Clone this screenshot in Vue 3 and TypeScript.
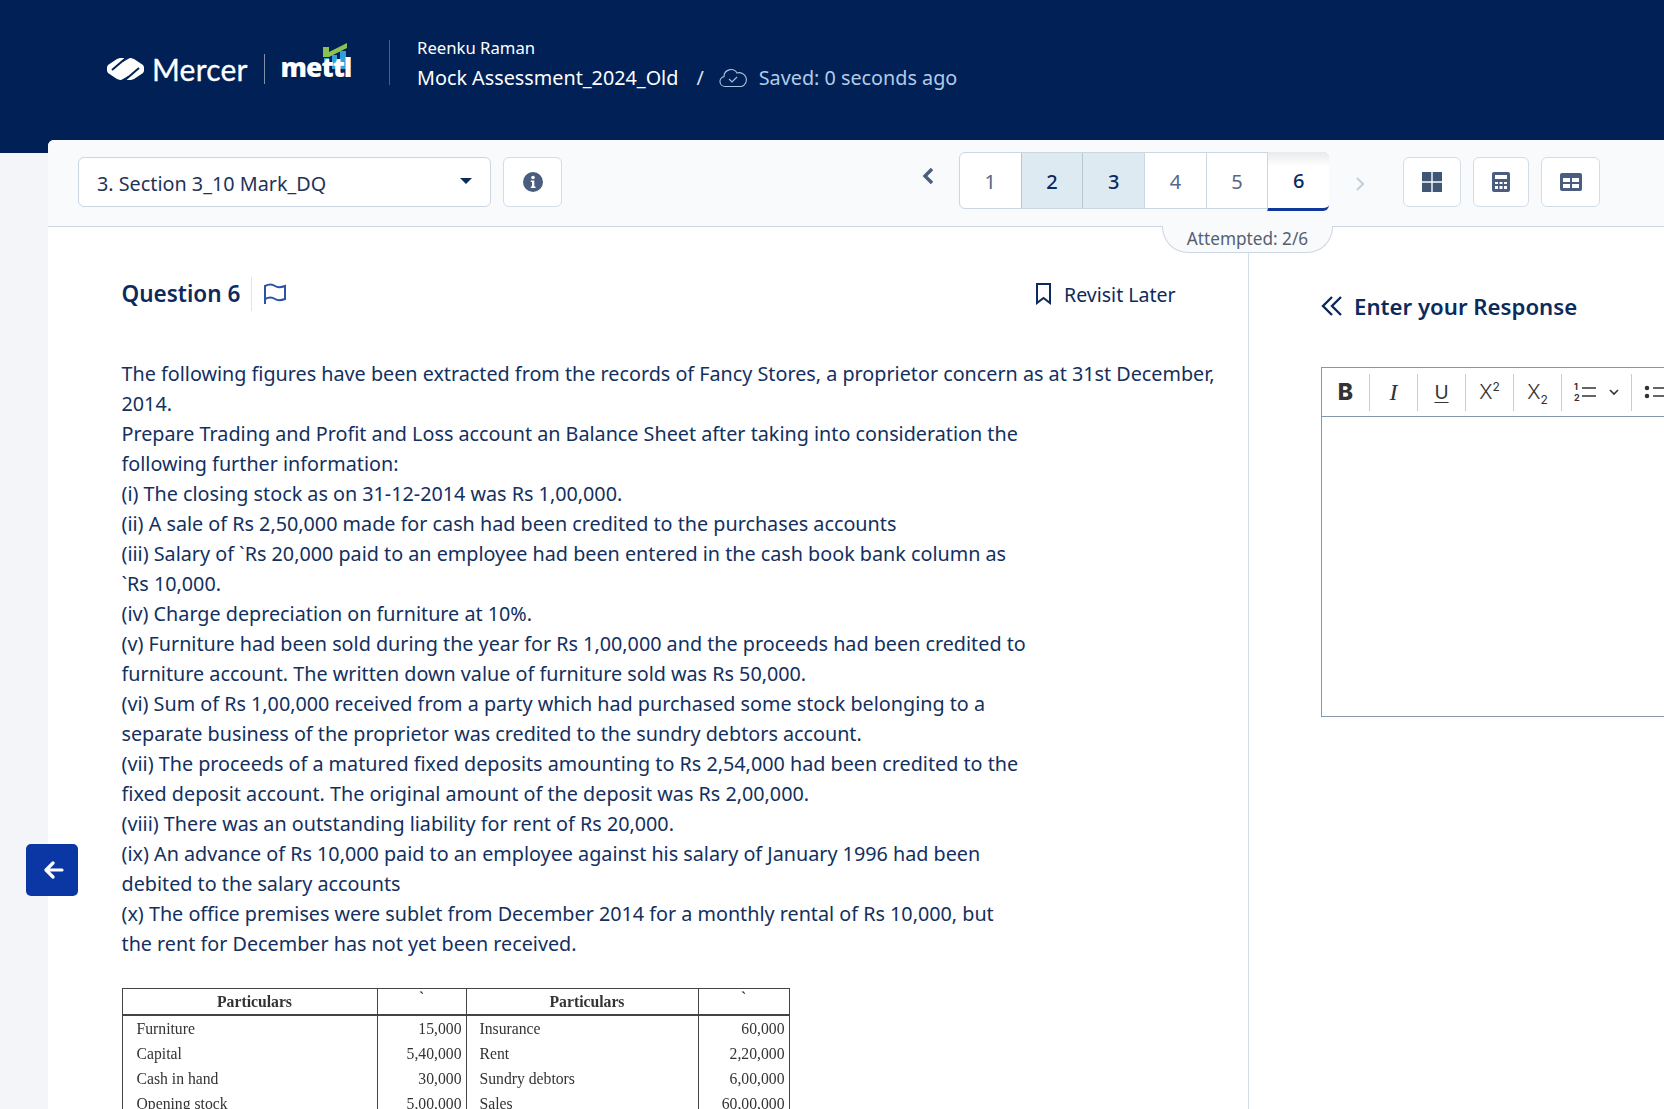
<script setup lang="ts">
const pages = [
  { n: 1, state: '' },
  { n: 2, state: 'done' },
  { n: 3, state: 'done' },
  { n: 4, state: '' },
  { n: 5, state: '' },
  { n: 6, state: 'current' }
]

const lines = [
  'The following figures have been extracted from the records of Fancy Stores, a proprietor concern as at 31st December,',
  '2014.',
  'Prepare Trading and Profit and Loss account an Balance Sheet after taking into consideration the',
  'following further information:',
  '(i) The closing stock as on 31-12-2014 was Rs 1,00,000.',
  '(ii) A sale of Rs 2,50,000 made for cash had been credited to the purchases accounts',
  '(iii) Salary of `Rs 20,000 paid to an employee had been entered in the cash book bank column as',
  '`Rs 10,000.',
  '(iv) Charge depreciation on furniture at 10%.',
  '(v) Furniture had been sold during the year for Rs 1,00,000 and the proceeds had been credited to',
  'furniture account. The written down value of furniture sold was Rs 50,000.',
  '(vi) Sum of Rs 1,00,000 received from a party which had purchased some stock belonging to a',
  'separate business of the proprietor was credited to the sundry debtors account.',
  '(vii) The proceeds of a matured fixed deposits amounting to Rs 2,54,000 had been credited to the',
  'fixed deposit account. The original amount of the deposit was Rs 2,00,000.',
  '(viii) There was an outstanding liability for rent of Rs 20,000.',
  '(ix) An advance of Rs 10,000 paid to an employee against his salary of January 1996 had been',
  'debited to the salary accounts',
  '(x) The office premises were sublet from December 2014 for a monthly rental of Rs 10,000, but',
  'the rent for December has not yet been received.'
]

const rows = [
  ['Furniture', '15,000', 'Insurance', '60,000'],
  ['Capital', '5,40,000', 'Rent', '2,20,000'],
  ['Cash in hand', '30,000', 'Sundry debtors', '6,00,000'],
  ['Opening stock', '5,00,000', 'Sales', '60,00,000']
]
</script>

<template>
  <div class="page">
    <header class="topbar">
      <div class="logos">
        <svg class="mercer-mark" width="37" height="22" viewBox="0 0 37 22">
          <path d="M1 7 10 1 13 0h11l3 1 9 6 1 2v4l-1 2-9 6-3 1H13l-3-1-9-6-1-2V9z" fill="#fff" />
          <path d="M19 0 5 12" stroke="#002056" stroke-width="2" />
          <path d="M19 1l-4 3h1l5-3 2-1h-6z" fill="#002056" />
          <path d="M18 22 32 10" stroke="#002056" stroke-width="2" />
          <path d="M18 21l4-3h-1l-5 3-2 1h6z" fill="#002056" />
        </svg>
        <span class="mercer">Mercer</span>
        <span class="logo-sep"></span>
        <span class="mettl-wrap">
          <svg class="mettl-bars" width="26" height="26" viewBox="0 0 26 26">
            <path d="M2 15h5v11H2zM10 12h5v14h-5zM18 8h6v18h-6z" fill="#2f9fe0" />
            <path d="M1 4h6v5L25 0v5L7 14H1z" fill="#8cc152" />
          </svg>
          <span class="mettl">mettl</span>
        </span>
      </div>
      <div class="head-text">
        <div class="candidate">Reenku Raman</div>
        <div class="test-row">
          <span>Mock Assessment_2024_Old</span>
          <span class="slash">/</span>
          <svg width="28" height="20" viewBox="0 0 28 20" fill="none" stroke="#a9c3df" stroke-width="1.100">
            <path d="M7 18.500H6a5 5 0 0 1-1-9.900A7 7 0 0 1 18 5a5.500 5.500 0 0 1 4.500 13.500z" />
            <path d="m10 11 3 3 5-5" />
          </svg>
          <span class="saved">Saved: 0 seconds ago</span>
        </div>
      </div>
    </header>

    <main class="card">
      <div class="toolbar">
        <div class="section-select">
          <span>3. Section 3_10 Mark_DQ</span>
          <i class="caret"></i>
        </div>
        <button class="tool info">
          <svg width="20" height="20" viewBox="0 0 20 20">
            <circle cx="10" cy="10" r="10" fill="#4a5d7e" />
            <circle cx="10" cy="5.500" r="1.800" fill="#fff" />
            <path d="M7.800 8.500h3.500v6h1.200v1.500H7.800v-1.500H9v-4.500H7.800z" fill="#fff" />
          </svg>
        </button>

        <div class="nav">
          <svg class="chev" width="12" height="18" viewBox="0 0 12 18" fill="none" stroke="#4a5d7e" stroke-width="3.400">
            <path d="M10 2 3 9l7 7" />
          </svg>
          <div class="pager">
            <div
              v-for="p in pages"
              :key="p.n"
              class="page-cell"
              :class="p.state"
            >
              {{ p.n }}
            </div>
          </div>
          <svg class="chev next" width="10" height="16" viewBox="0 0 10 16" fill="none" stroke="#c3ced9" stroke-width="2">
            <path d="m2 2 6 6-6 6" />
          </svg>
        </div>

        <div class="tools">
          <button class="tool grid-btn">
            <svg width="20" height="20" viewBox="0 0 20 20" fill="#3f5675">
              <path d="M0 0h9.300v9.300H0zM10.700 0H20v9.300h-9.300zM0 10.700h9.300V20H0zM10.700 10.700H20V20h-9.300z" />
            </svg>
          </button>
          <button class="tool calc-btn">
            <svg width="18" height="20" viewBox="0 0 18 20">
              <path fill="#4a5d7e" fill-rule="evenodd" d="M2 0h14a2 2 0 0 1 2 2v16a2 2 0 0 1-2 2H2a2 2 0 0 1-2-2V2a2 2 0 0 1 2-2zm1 3v4h12V3zm0 7v2h3v-2zm4.500 0v2h3v-2zm4.500 0v2h3v-2zm-9 4v3h3v-3zm4.500 0v3h3v-3zm4.500 0v3h3v-3z" />
            </svg>
          </button>
          <button class="tool table-btn">
            <svg width="22" height="18" viewBox="0 0 22 18">
              <path fill="#4a5d7e" fill-rule="evenodd" d="M2 0h18a2 2 0 0 1 2 2v14a2 2 0 0 1-2 2H2a2 2 0 0 1-2-2V2a2 2 0 0 1 2-2zm1 5v4h7V5zm9 0v4h7V5zM3 11v4h7v-4zm9 0v4h7v-4z" />
            </svg>
          </button>
        </div>

        <div class="attempted">Attempted: 2/6</div>
      </div>

      <div class="panes">
        <section class="question">
          <div class="q-head">
            <h2>Question 6</h2>
            <span class="q-sep"></span>
            <svg class="flag" width="24" height="22" viewBox="0 0 24 22" fill="none" stroke="#2a52a8" stroke-width="2">
              <path d="M2 21V3c4-2 7-2 10 0s6 1.500 10 0v13c-4 1.500-7 2-10 0s-6-2-10 0" />
            </svg>
            <div class="revisit">
              <svg width="17" height="22" viewBox="0 0 17 22" fill="none" stroke="#0d2a5c" stroke-width="2">
                <path d="M2 1h13v19l-6.500-5L2 20z" />
              </svg>
              <span>Revisit Later</span>
            </div>
          </div>

          <div class="q-text">
            <div v-for="(line, i) in lines" :key="i">{{ line }}</div>
          </div>

          <table class="ledger">
            <colgroup>
              <col style="width: 255px" />
              <col style="width: 89px" />
              <col style="width: 232px" />
              <col style="width: 91px" />
            </colgroup>
            <thead>
              <tr>
                <th class="head-l">Particulars</th>
                <th class="tick">`</th>
                <th class="head-l">Particulars</th>
                <th class="tick">`</th>
              </tr>
            </thead>
            <tbody>
              <tr v-for="row in rows" :key="row[0]">
                <td class="name">{{ row[0] }}</td>
                <td class="num">{{ row[1] }}</td>
                <td class="name2">{{ row[2] }}</td>
                <td class="num">{{ row[3] }}</td>
              </tr>
            </tbody>
          </table>
        </section>

        <section class="response">
          <div class="resp-head">
            <svg width="22" height="22" viewBox="0 0 22 22" fill="none" stroke="#0d2a5c" stroke-width="2.400">
              <path d="M11 2 2 11l9 9M20 2l-9 9 9 9" />
            </svg>
            <h3>Enter your Response</h3>
          </div>
          <div class="editor">
            <div class="ed-bar">
              <div class="ed-btn"><b class="bold">B</b></div>
              <div class="ed-btn"><i class="ital">I</i></div>
              <div class="ed-btn"><span class="under">U</span></div>
              <div class="ed-btn"><span class="script">X<sup>2</sup></span></div>
              <div class="ed-btn"><span class="script">X<sub>2</sub></span></div>
              <div class="ed-btn wide">
                <svg width="52" height="22" viewBox="0 0 52 22" fill="none" stroke="#333" stroke-width="1.600">
                  <path d="M11 7h14M11 15h14M39 9l4 4 4-4" />
                  <text x="3" y="9" class="mini">1</text>
                  <text x="3" y="20" class="mini">2</text>
                </svg>
              </div>
              <div class="ed-btn">
                <svg width="24" height="20" viewBox="0 0 24 20" fill="none" stroke="#333" stroke-width="1.500">
                  <circle cx="3" cy="6" r="1.500" fill="#333" />
                  <circle cx="3" cy="14" r="1.500" fill="#333" />
                  <path d="M9 6h14M9 14h14" />
                </svg>
              </div>
            </div>
          </div>
        </section>
      </div>
    </main>

    <button class="back-btn">
      <svg width="20" height="18" viewBox="0 0 20 18" fill="none" stroke="#fff" stroke-width="3.200" stroke-linecap="round" stroke-linejoin="round">
        <path d="M9 2 2 9l7 7M3 9h15" />
      </svg>
    </button>
  </div>
</template>

<style>
html,
body {
  margin: 0;
  overflow: hidden;
  background: #f3f5f8;
}
</style>

<style scoped>
.page {
  position: relative;
  height: 1109px;
  overflow: hidden;
  font-family: 'Noto Sans', 'Open Sans', sans-serif;
  color: #0d2a5c;
}

.topbar {
  height: 153px;
  box-sizing: border-box;
  background: #002056;
  display: flex;
  align-items: flex-start;
  padding: 40px 0 0 107px;
  color: #fff;
}

.logos {
  display: flex;
  align-items: center;
  height: 45px;
  width: 283px;
  box-sizing: border-box;
  padding-top: 13px;
  border-right: 1px solid #4a5f82;
}

.mercer-mark {
  flex: none;
  margin-right: 8px;
}

.mercer {
  font-size: 30px;
  line-height: 1;
  font-family: Lato, sans-serif;
  letter-spacing: 0.2px;
  -webkit-text-stroke: 0.3px #fff;
}

.logo-sep {
  width: 1px;
  height: 30px;
  background: #8090aa;
  margin: 0 16px;
}

.mettl-wrap {
  position: relative;
  display: block;
  padding: 0 0 2px 0;
}

.mettl {
  position: relative;
  z-index: 1;
  font-size: 26.500px;
  font-weight: 800;
  line-height: 1;
  font-family: 'Open Sans', sans-serif;
  letter-spacing: -1px;
}

.mettl-bars {
  position: absolute;
  left: 41px;
  top: -11px;
}

.head-text {
  padding-left: 27px;
  margin-top: -4px;
}

.candidate {
  font-size: 16.700px;
  line-height: 24px;
  margin-bottom: 3px;
}

.test-row {
  display: flex;
  align-items: center;
  font-size: 19.800px;
  line-height: 30px;
}

.slash {
  margin: 0 15px 0 18px;
  color: #dbe4f0;
}

.saved {
  margin-left: 12px;
  color: #b4cbe6;
}

.card {
  margin: -13px 0 0 48px;
  height: 970px;
  background: #fff;
  border-radius: 6px 0 0 0;
  position: relative;
}

.toolbar {
  position: relative;
  height: 87px;
  box-sizing: border-box;
  background: #f8fafc;
  border-bottom: 1px solid #cbd6e2;
  border-radius: 6px 0 0 0;
  display: flex;
  align-items: flex-start;
  padding: 17px 0 0 30px;
}

.section-select {
  width: 413px;
  height: 50px;
  box-sizing: border-box;
  background: #fff;
  border: 1px solid #cbd6e2;
  border-radius: 6px;
  display: flex;
  align-items: center;
  justify-content: space-between;
  padding: 2px 18px 0 18px;
  font-size: 19.800px;
  color: #1e3358;
}

.caret {
  width: 0;
  height: 0;
  border: 6px solid transparent;
  border-top: 6px solid #0d2a5c;
  border-bottom: 0;
  margin-top: -4px;
}

.tool {
  height: 50px;
  padding: 0;
  box-sizing: border-box;
  background: #fff;
  border: 1px solid #d3dde8;
  border-radius: 6px;
  display: flex;
  align-items: center;
  justify-content: center;
}

.info {
  width: 59px;
  margin-left: 12px;
}

.nav {
  display: flex;
  align-items: flex-start;
  margin: -5px 0 0 360px;
}

.chev {
  margin: 15px 25px 0 0;
  flex: none;
}

.chev.next {
  margin: 24px 0 0 26px;
}

.pager {
  width: 370px;
  height: 57px;
  box-sizing: border-box;
  display: flex;
  background: #fff;
  border: 1px solid #cbd6e2;
  border-radius: 6px;
}

.page-cell {
  flex: 1;
  display: flex;
  align-items: center;
  justify-content: center;
  border-left: 1px solid #cbd6e2;
  font-size: 20px;
  color: #56688a;
  padding-top: 1px;
}

.page-cell:first-child {
  border-left: 0;
}

.page-cell.done {
  background: #deeaf1;
  border-left-color: #b8c7d4;
  color: #0d2a5c;
  font-weight: 500;
}

.page-cell.current {
  color: #0d2a5c;
  font-weight: 500;
  margin: -1px -1px -3px 0;
  background: linear-gradient(#e9eaec, #fff 14px);
  border-bottom: 3px solid #0f3a9c;
  border-radius: 0 6px 6px 0;
}

.tools {
  display: flex;
  gap: 12px;
  margin-left: 38px;
}

.grid-btn {
  width: 58px;
}

.calc-btn {
  width: 56px;
}

.table-btn {
  width: 59px;
}

.attempted {
  position: absolute;
  left: 1114px;
  top: 86px;
  width: 171px;
  height: 27px;
  box-sizing: border-box;
  background: #f8fafc;
  border: 1px solid #cbd6e2;
  border-top: 0;
  border-radius: 0 0 26px 26px;
  text-align: center;
  font-size: 17.200px;
  line-height: 25px;
  color: #555f6e;
}

.panes {
  display: flex;
  height: 883px;
}

.question {
  width: 1201px;
  flex: none;
  box-sizing: border-box;
  border-right: 1px solid #d3dde8;
  padding: 48px 0 0 73.500px;
}

.q-head {
  display: flex;
  align-items: center;
  height: 38px;
  width: 1054px;
}

.q-head h2 {
  margin: 0;
  font-size: 22.500px;
  font-weight: 600;
  line-height: 38px;
}

.q-sep {
  width: 1px;
  height: 34px;
  background: #dfe5ec;
  margin: 0 11px;
}

.flag {
  flex: none;
}

.revisit {
  margin-left: auto;
  display: flex;
  align-items: center;
  gap: 12px;
  font-size: 19.500px;
}

.q-text {
  margin-top: 46px;
  font-size: 19.750px;
  line-height: 30px;
  color: #13305f;
  white-space: nowrap;
}

.ledger {
  margin-top: 29px;
  width: 667px;
  table-layout: fixed;
  border-collapse: collapse;
  border: 1.500px solid #555;
  font-family: 'Liberation Serif', serif;
  font-size: 15.700px;
  color: #333;
  filter: blur(0.45px);
}

.ledger th {
  height: 25px;
  padding: 0;
  border: 1px solid #444;
  border-bottom: 2px solid #444;
  font-size: 15.700px;
}

.ledger th.head-l {
  padding-left: 10px;
}

.ledger th.tick {
  vertical-align: top;
  line-height: 18px;
}

.ledger td {
  height: 25px;
  padding: 0;
  border-left: 1px solid #444;
  border-right: 1px solid #444;
}

.name {
  padding-left: 14px !important;
}

.name2 {
  padding-left: 13px !important;
}

.num {
  text-align: right;
  padding-right: 4px !important;
}

.response {
  flex: 1;
  min-width: 0;
  padding: 60px 0 0 72px;
}

.resp-head {
  display: flex;
  align-items: center;
  gap: 11px;
  height: 38px;
}

.resp-head h3 {
  margin: 0;
  font-size: 22.200px;
  font-weight: 600;
}

.editor {
  margin-top: 42px;
  width: 500px;
  height: 350px;
  box-sizing: border-box;
  border: 1px solid #8797ab;
  overflow: hidden;
}

.ed-bar {
  height: 49px;
  box-sizing: border-box;
  border-bottom: 1px solid #8797ab;
  display: flex;
  align-items: center;
  font-family: Inter, sans-serif;
  color: #333;
}

.ed-btn {
  width: 47px;
  height: 37px;
  flex: none;
  border-right: 1.500px solid #ccc;
  display: flex;
  align-items: center;
  justify-content: center;
  font-size: 20px;
}

.ed-btn.wide {
  width: 69px;
}

.ed-btn:last-child {
  border-right: 0;
}

.bold {
  font-size: 23px;
  font-weight: 800;
}

.ital {
  font-family: 'Liberation Serif', serif;
  font-size: 24px;
}

.under {
  text-decoration: underline;
  text-underline-offset: 3px;
  font-size: 19px;
}

.script {
  font-weight: 300;
}

.script sup,
.script sub {
  font-size: 12px;
  line-height: 0;
  font-weight: 400;
}

.mini {
  font-size: 9px;
  font-weight: 700;
  fill: #333;
  stroke: none;
}

.back-btn {
  position: absolute;
  left: 26px;
  top: 844px;
  width: 52px;
  height: 52px;
  padding: 0 0 0 4px;
  border: 0;
  border-radius: 5px;
  background: #0a37a3;
  display: flex;
  align-items: center;
  justify-content: center;
}
</style>
